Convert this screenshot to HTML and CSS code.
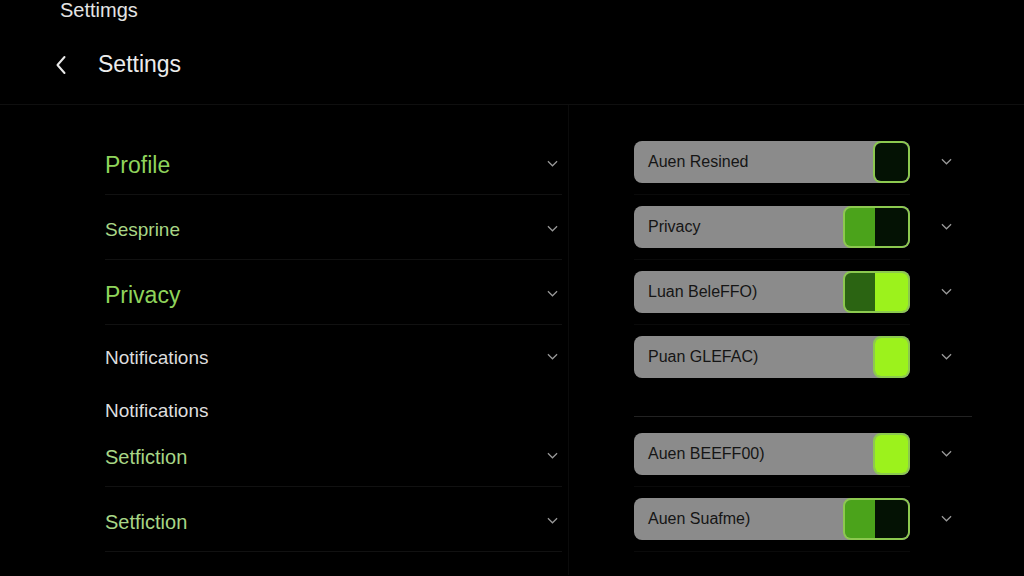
FILE: index.html
```html
<!DOCTYPE html>
<html>
<head>
<meta charset="utf-8">
<link rel="stylesheet" href="styles.css">
</head>
<body>
<div class="topbar">Settimgs</div>
<header class="header">
  <svg class="back" width="12" height="20" viewBox="0 0 12 20"><path d="M9.5 2 L2.5 10 L9.5 18" fill="none" stroke="#e8e8e8" stroke-width="2" stroke-linecap="round" stroke-linejoin="round"/></svg>
  <span class="title">Settings</span>
</header>
<main class="main">
  <section class="left">
    <div class="row"><span class="label green big">Profile</span><svg class="chev" viewBox="0 0 12 7"><path d="M1 1 L6 6 L11 1" fill="none" stroke="#9a9a9a" stroke-width="1.3"/></svg></div>
    <div class="row"><span class="label pale">Sesprine</span><svg class="chev" viewBox="0 0 12 7"><path d="M1 1 L6 6 L11 1" fill="none" stroke="#9a9a9a" stroke-width="1.3"/></svg></div>
    <div class="row"><span class="label green big">Privacy</span><svg class="chev" viewBox="0 0 12 7"><path d="M1 1 L6 6 L11 1" fill="none" stroke="#9a9a9a" stroke-width="1.3"/></svg></div>
    <div class="row short noline"><span class="label white">Notifications</span><svg class="chev" viewBox="0 0 12 7"><path d="M1 1 L6 6 L11 1" fill="none" stroke="#9a9a9a" stroke-width="1.3"/></svg></div>
    <div class="heading">Notifications</div>
    <div class="row"><span class="label pale mid">Setfiction</span><svg class="chev" viewBox="0 0 12 7"><path d="M1 1 L6 6 L11 1" fill="none" stroke="#9a9a9a" stroke-width="1.3"/></svg></div>
    <div class="row"><span class="label pale mid">Setfiction</span><svg class="chev" viewBox="0 0 12 7"><path d="M1 1 L6 6 L11 1" fill="none" stroke="#9a9a9a" stroke-width="1.3"/></svg></div>
  </section>
  <section class="right">
    <div class="trow">
      <div class="toggle"><span class="ttext">Auen Resined</span><span class="knob"><span class="k k-dark"></span></span></div>
      <svg class="chev" viewBox="0 0 12 7"><path d="M1 1 L6 6 L11 1" fill="none" stroke="#9a9a9a" stroke-width="1.3"/></svg>
    </div>
    <div class="trow">
      <div class="toggle"><span class="ttext">Privacy</span><span class="knob"><span class="k k-green"></span><span class="k k-dark"></span></span></div>
      <svg class="chev" viewBox="0 0 12 7"><path d="M1 1 L6 6 L11 1" fill="none" stroke="#9a9a9a" stroke-width="1.3"/></svg>
    </div>
    <div class="trow">
      <div class="toggle"><span class="ttext">Luan BeleFFO)</span><span class="knob"><span class="k k-deep"></span><span class="k k-lime"></span></span></div>
      <svg class="chev" viewBox="0 0 12 7"><path d="M1 1 L6 6 L11 1" fill="none" stroke="#9a9a9a" stroke-width="1.3"/></svg>
    </div>
    <div class="trow noline">
      <div class="toggle"><span class="ttext">Puan GLEFAC)</span><span class="knob"><span class="k k-lime"></span></span></div>
      <svg class="chev" viewBox="0 0 12 7"><path d="M1 1 L6 6 L11 1" fill="none" stroke="#9a9a9a" stroke-width="1.3"/></svg>
    </div>
    <div class="rdivider"></div>
    <div class="trow">
      <div class="toggle"><span class="ttext">Auen BEEFF00)</span><span class="knob"><span class="k k-lime"></span></span></div>
      <svg class="chev" viewBox="0 0 12 7"><path d="M1 1 L6 6 L11 1" fill="none" stroke="#9a9a9a" stroke-width="1.3"/></svg>
    </div>
    <div class="trow">
      <div class="toggle"><span class="ttext">Auen Suafme)</span><span class="knob"><span class="k k-green"></span><span class="k k-dark"></span></span></div>
      <svg class="chev" viewBox="0 0 12 7"><path d="M1 1 L6 6 L11 1" fill="none" stroke="#9a9a9a" stroke-width="1.3"/></svg>
    </div>
  </section>
</main>
</body>
</html>
```
FILE: styles.css
```css
html, body {
  margin: 0;
  padding: 0;
  background: #000;
  width: 1024px;
  height: 576px;
  overflow: hidden;
  font-family: "Liberation Sans", Arial, sans-serif;
  color: #e6e6e6;
}

.topbar {
  height: 22px;
  padding-left: 60px;
  font-size: 20px;
  line-height: 20px;
  color: #e4e4e4;
}

.header {
  height: 83px;
  display: flex;
  align-items: center;
  padding-left: 55px;
  padding-top: 3px;
  border-bottom: 1px solid #0f0f0f;
  box-sizing: border-box;
}

.back {
  width: 12px;
  height: 20px;
  margin-right: 31px;
}

.title {
  font-size: 23px;
  color: #ececec;
}

.main {
  display: flex;
  height: 470px;
}

.left {
  width: 457px;
  margin-left: 105px;
  padding-right: 6px;
  border-right: 1px solid #0b0b0b;
  padding-top: 25px;
}

.row {
  display: flex;
  align-items: center;
  justify-content: space-between;
  padding-top: 6px;
  height: 58px;
  border-bottom: 1px solid #111;
}

.row.short {
  height: 54px;
}

.row.noline {
  border-bottom-color: transparent;
}

.heading {
  height: 22px;
  padding-top: 14px;
  font-size: 19px;
  line-height: 22px;
  color: #dedede;
}

.label {
  font-size: 19px;
}

.label.big {
  font-size: 23px;
}

.label.mid {
  font-size: 20px;
}

.green {
  color: #8fd45b;
}

.pale {
  color: #a8d686;
}

.white {
  color: #dcdcdc;
}

.chev {
  width: 11px;
  height: 7px;
  margin-right: 4px;
  margin-top: -4px;
}

.right {
  padding-left: 65px;
  padding-top: 25px;
  width: 338px;
}

.trow {
  height: 64px;
  display: flex;
  align-items: center;
  border-bottom: 1px solid #0a0a0a;
  width: 276px;
}

.trow.noline {
  border-bottom-color: transparent;
}

.trow .chev {
  margin-left: 31px;
  margin-top: -2px;
  flex: none;
}

.toggle {
  width: 276px;
  flex: none;
  height: 42px;
  border-radius: 8px;
  background: #8b8b8b;
  display: flex;
  align-items: center;
  justify-content: space-between;
  box-sizing: border-box;
  overflow: hidden;
}

.ttext {
  padding-left: 14px;
  font-size: 16px;
  color: #151515;
}

.knob {
  display: flex;
  height: 42px;
  border: 2px solid #8cc94f;
  border-radius: 8px;
  box-sizing: border-box;
  overflow: hidden;
}

.k {
  display: block;
  height: 100%;
}

.k-dark {
  width: 33px;
  background: #041204;
}

.k-lime {
  width: 33px;
  background: #9cf21c;
}

.k-green {
  width: 30px;
  background: #4ba31b;
}

.k-deep {
  width: 30px;
  background: #2b6412;
}

.rdivider {
  width: 338px;
  height: 1px;
  background: #222;
  margin-top: 26px;
  margin-bottom: 5px;
}
```
